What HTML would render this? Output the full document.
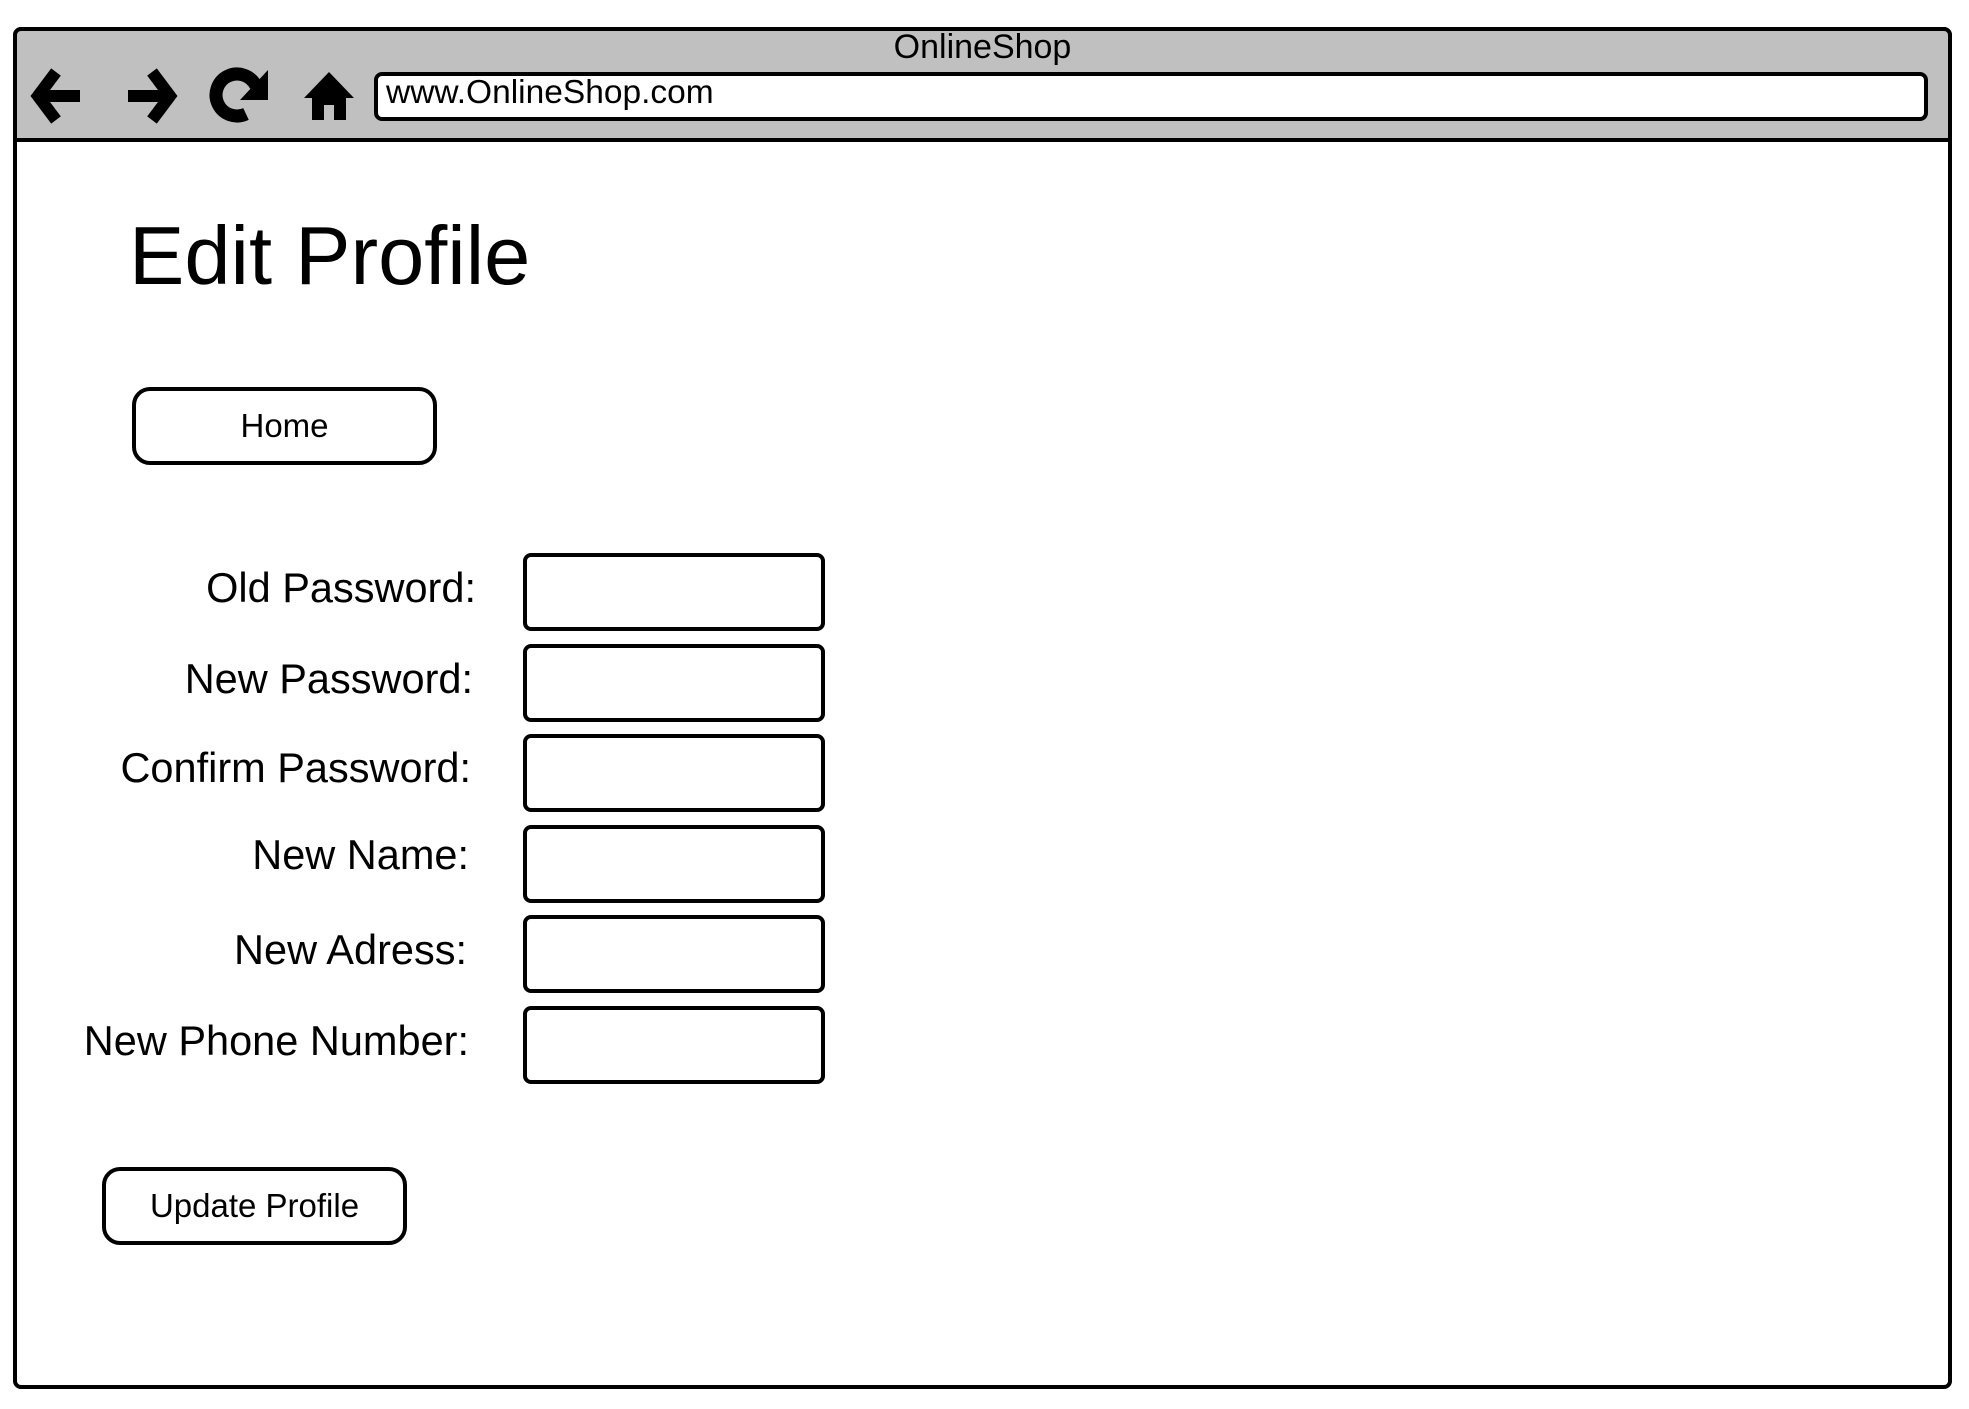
<!DOCTYPE html>
<html><head><meta charset="utf-8"><style>
*{margin:0;padding:0;box-sizing:border-box}
body{width:1969px;height:1409px;background:#fff;position:relative;overflow:hidden;font-family:"Liberation Sans",Arial,sans-serif;color:#000}
.abs{position:absolute}
.frame{left:13px;top:27px;border:4px solid #000;border-radius:8px}
.hdr{left:13px;top:27px;height:115px;background:#c0c0c0;border:4px solid #000;border-radius:8px 8px 0 0}
.url{left:374px;top:72px;height:49px;background:#fff;border:4px solid #000;border-radius:8px}
.box{left:523px;width:302px;height:78px;border:4px solid #000;border-radius:8px;background:#fff}
.btn{border:4px solid #000;border-radius:18px;background:#fff;text-align:center;font-size:33px}
.lbl{font-size:41.5px;text-align:right;left:0;white-space:nowrap;line-height:46px}
</style></head><body>
<div class="abs frame" style="width:1939px;height:1362px"></div>
<div class="abs hdr" style="width:1939px"></div>
<div class="abs" style="left:13px;top:26px;width:1939px;text-align:center;font-size:34px;line-height:42px">OnlineShop</div>
<div class="abs url" style="width:1554px"></div>
<div class="abs" style="left:386px;top:72px;font-size:33.5px;line-height:42px">www.OnlineShop.com</div>
<svg class="abs" style="left:0;top:0" width="380" height="140" viewBox="0 0 380 140">
 <path d="M80 96 H42 M56 72 L38 96 L56 120" fill="none" stroke="#000" stroke-width="12"/>
 <path d="M128 96 H166 M152 72 L170 96 L152 120" fill="none" stroke="#000" stroke-width="12"/>
 <path d="M256 86 A21 21 0 1 0 246 114" fill="none" stroke="#000" stroke-width="13"/>
 <path d="M268 70 V100 L240 100 Z" fill="#000"/>
 <path d="M329 72 L304 98 H312 V120 H324 V105 H334 V120 H346 V98 H354 Z" fill="#000"/>
</svg>
<div class="abs" style="left:129px;top:206px;font-size:83px;line-height:100px">Edit Profile</div>
<div class="abs btn" style="left:132px;top:387px;width:305px;height:78px;line-height:70px">Home</div>
<div class="abs lbl" style="top:565px;width:476px">Old Password:</div>
<div class="abs lbl" style="top:656px;width:473px">New Password:</div>
<div class="abs lbl" style="top:745px;width:471px">Confirm Password:</div>
<div class="abs lbl" style="top:832px;width:469px">New Name:</div>
<div class="abs lbl" style="top:927px;width:467px">New Adress:</div>
<div class="abs lbl" style="top:1018px;width:469px">New Phone Number:</div>
<div class="abs box" style="top:553px"></div>
<div class="abs box" style="top:644px"></div>
<div class="abs box" style="top:734px"></div>
<div class="abs box" style="top:825px"></div>
<div class="abs box" style="top:915px"></div>
<div class="abs box" style="top:1006px"></div>
<div class="abs btn" style="left:102px;top:1167px;width:305px;height:78px;line-height:70px">Update Profile</div>
</body></html>
